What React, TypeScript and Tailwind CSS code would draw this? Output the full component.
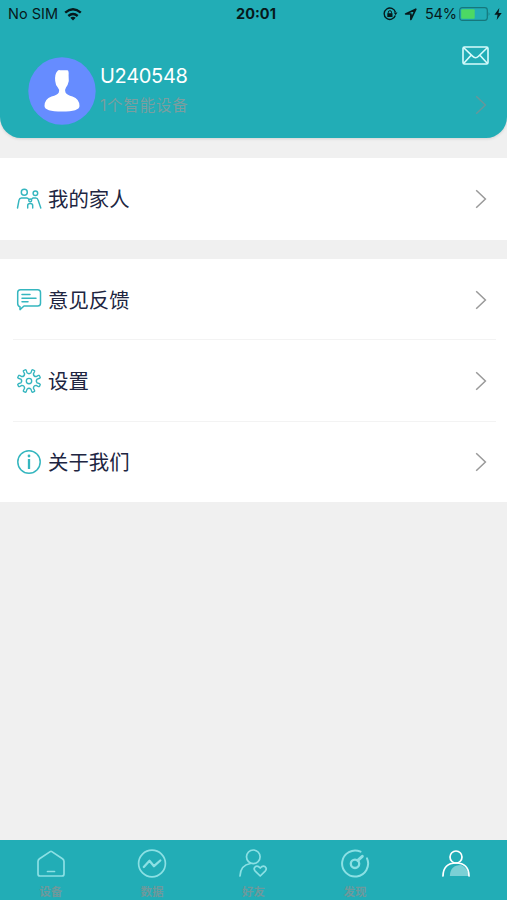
import type { ReactNode } from 'react';

type IconProps = { className?: string };

function ChevronRight({ className = 'text-[#999]' }: IconProps) {
  return (
    <svg className={className} width="12" height="20" viewBox="0 0 12 20" fill="none" stroke="currentColor" strokeWidth="1.5">
      <path d="M1.2 1.3 10.4 10 1.2 18.7" />
    </svg>
  );
}

function FamilyIcon() {
  return (
    <svg width="26" height="22" viewBox="0 0 26 22" fill="none" stroke="currentColor" strokeWidth="1.45" strokeLinecap="round">
      <circle cx="8.3" cy="4.3" r="3" />
      <circle cx="19.4" cy="5.2" r="2.3" />
      <circle cx="14.2" cy="12.4" r="1.4" />
      <path d="M1.5 20 3 12.2Q3.5 10 5.4 10H10.8Q12 10 12.9 11.3M15.5 11.3 17 10H19.8Q21.5 10 22.1 12L24.8 20M11.7 20V17.4Q11.7 15.4 14.2 15.4T16.7 17.4V20" />
    </svg>
  );
}

function FeedbackIcon() {
  return (
    <svg width="26" height="24" viewBox="0 0 26 24" fill="none" stroke="currentColor" strokeWidth="1.5" strokeLinecap="round" strokeLinejoin="round">
      <path d="M4.5 1.8H21.7Q24.5 1.8 24.5 4.6V15.2Q24.5 18 21.7 18H8L4 21.6V18.8Q1.7 18 1.7 15.5V4.6Q1.7 1.8 4.5 1.8Z" />
      <path d="M6 6.6H14M6 10.2H20M6 13.7H12" />
    </svg>
  );
}

const polar = (radius: number, deg: number) => {
  const rad = (deg * Math.PI) / 180;
  return `${(13 + radius * Math.sin(rad)).toFixed(2)} ${(13 - radius * Math.cos(rad)).toFixed(2)}`;
};

// Eight teeth, none of them straight up
const gearPath = [22.5, 67.5, 112.5, 157.5, 202.5, 247.5, 292.5, 337.5]
  .map((a, i) => `${i === 0 ? 'M' : 'L'}${polar(8.4, a - 9)}L${polar(11, a - 8)}Q${polar(12, a - 7)} ${polar(11.8, a - 3)}L${polar(11.8, a + 3)}Q${polar(12, a + 7)} ${polar(11, a + 8)}L${polar(8.4, a + 9)}Q${polar(6.4, a + 22.5)} ${polar(8.4, a + 36)}`)
  .join('');

function GearIcon() {
  return (
    <svg width="26" height="26" viewBox="0 0 26 26" fill="none" stroke="currentColor" strokeWidth="1.35" strokeLinejoin="round">
      <path d={`${gearPath}Z`} />
      <circle cx="13" cy="13" r="2.7" />
    </svg>
  );
}

function InfoIcon() {
  return (
    <svg width="26" height="26" viewBox="0 0 26 26" fill="none" stroke="currentColor">
      <circle cx="13" cy="13" r="11.2" strokeWidth="1.5" />
      <path d="M13 10V20" strokeWidth="2.3" />
      <circle cx="13" cy="7" r="1.4" fill="currentColor" stroke="none" />
    </svg>
  );
}

function StatusBar() {
  return (
    <div className="grid h-7 grid-cols-[1fr_auto_1fr] items-center text-[14.5px] text-[#07191b]">
      <div className="flex items-center gap-[6px] pl-2">
        <span className="w-[50px] whitespace-nowrap">No SIM</span>
        <svg width="18" height="13" viewBox="0 0 18 13" fill="none" stroke="currentColor" strokeWidth="2.4">
          <path d="M1.2 4.7Q9-2 16.8 4.7M4.3 8Q9 4.1 13.7 8" />
          <path d="M9 12.5 6.3 9.8Q9 7.8 11.7 9.8Z" fill="currentColor" stroke="none" />
        </svg>
      </div>
      <span className="pl-[5px] font-bold">20:01</span>
      <div className="flex items-center justify-end pr-[5px]">
        <svg width="15" height="14" viewBox="0 0 15 14" fill="none" stroke="currentColor" strokeWidth="1.4">
          <path d="M12.3 8.5A5.7 5.7 0 1 1 12.4 5.3" />
          <path d="M10.7 5.5H14.5L12.6 8.2Z" fill="currentColor" stroke="none" />
          <rect x="4.3" y="6.2" width="5.2" height="3.8" fill="currentColor" stroke="none" />
          <path d="M5.3 6.5V5.2Q5.3 3.7 6.9 3.7T8.5 5.2V6.5" strokeWidth="1" />
        </svg>
        <svg className="ml-[6px]" width="13" height="13" viewBox="0 0 13 13" fill="none" stroke="currentColor" strokeWidth="1.7" strokeLinejoin="round">
          <path d="M11.8 1.2 1.6 6H6.9V11.4Z" />
        </svg>
        <span className="ml-[8px] w-[31px] whitespace-nowrap tracking-[-0.2px]">54%</span>
        <svg className="ml-[3px]" width="32" height="14" viewBox="0 0 32 14" fill="none">
          <rect x="0.7" y="0.7" width="27.6" height="12.6" rx="2.5" stroke="#16777c" strokeWidth="1.2" />
          <rect x="2.2" y="2.2" width="13.5" height="9.6" rx="1" fill="#4cd964" />
          <path d="M29.7 5Q31.4 7 29.7 9Z" fill="#16777c" />
        </svg>
        <svg className="ml-[3px]" width="8" height="12" viewBox="0 0 8 12" fill="currentColor">
          <path d="M5.3 0 0.4 6.7H3.6L2.7 12 7.7 5H4.5Z" />
        </svg>
      </div>
    </div>
  );
}

function ProfileHeader() {
  return (
    <header className="h-[138px] rounded-b-[21px] bg-[#22adb6] shadow-[0_1px_3px_rgba(0,0,0,0.12)]">
      <StatusBar />
      <div className="flex h-[110px] pl-7 pr-[18px]">
        <svg className="mt-[29px] shrink-0" width="68" height="68" viewBox="0 0 68 68">
          <circle cx="34" cy="34" r="33.7" fill="#668cff" />
          <path d="M29.5 14Q30.5 12.8 32 13.2L39.5 13.2Q41 14 40.6 18L40.8 24Q40 28 38 30.5Q36.5 32.5 37.5 35.5Q39 38 44.5 39.5Q51.5 42 51.5 49Q51.5 54.5 34 54.5T16.5 49Q16.5 42 23.5 39.5Q29.5 38 30.8 35.5Q31.8 32.5 29.8 30.5Q27.5 28 27.2 24Q26.5 17 29.5 14Z" fill="#fff" />
        </svg>
        <div className="ml-1 flex flex-col pt-[35px]">
          <span className="text-[20px] leading-[26px] tracking-[-0.3px] text-white">U240548</span>
          <span className="mt-[5px] text-[15.5px] leading-6 tracking-[0.8px] text-[#7b9ea0]">1个智能设备</span>
        </div>
        <div className="ml-auto flex flex-col items-end">
          <svg className="mt-[18px] text-[#d8fbfc]" width="27" height="19" viewBox="0 0 27 19" fill="none" stroke="currentColor" strokeWidth="1.6" strokeLinejoin="round">
            <rect x="1" y="1" width="25" height="17" rx="1.5" />
            <path d="M1.5 1.5 10.5 10.2Q13.5 13.2 16.5 10.2L25.5 1.5M1.8 17.3 9.3 9M25.2 17.3 17.7 9" />
          </svg>
          <div className="mr-[2px] mt-[30px]">
            <ChevronRight className="text-[#67979a]" />
          </div>
        </div>
      </div>
    </header>
  );
}

function MenuRow({ icon, label }: { icon: ReactNode; label: string }) {
  return (
    <div className="flex h-[81px] items-center pl-4 pr-5">
      <span className="flex w-[26px] justify-center text-[#35b6bf]">{icon}</span>
      <span className="ml-[6px] pt-[3px] text-[20.4px] text-[#202541]">{label}</span>
      <span className="ml-auto">
        <ChevronRight />
      </span>
    </div>
  );
}

const tabs = [
  {
    label: '设备',
    icon: (
      <>
        <path d="M3.5 9.8 14.2 2.6Q15 2.1 15.8 2.6L26.5 9.8Q28 10.9 28 12.5V25Q28 27 26 27H4Q2 27 2 25V12.5Q2 10.9 3.5 9.8Z" />
        <path d="M11.5 22.5H18.5" />
      </>
    ),
  },
  {
    label: '数据',
    icon: (
      <>
        <circle cx="15" cy="14.5" r="13.4" />
        <path d="M6.8 18 12.5 11.8 17 17.2 23.3 11.5" strokeWidth="2.3" />
      </>
    ),
  },
  {
    label: '好友',
    icon: (
      <>
        <circle cx="15.3" cy="7.8" r="6.8" />
        <path d="M2 27Q2.5 16 12.5 14.5" />
        <path d="M22.2 27 17 21.8Q15.2 19.5 17.2 17.8Q19.6 16.1 22.2 19Q24.8 16.1 27.2 17.8Q29.2 19.5 27.4 21.8Z" />
      </>
    ),
  },
  {
    label: '发现',
    icon: (
      <>
        <path d="M20.5 2.7A13 13 0 1 0 27 9.3" strokeWidth="2" />
        <circle cx="15" cy="14.8" r="4.2" strokeWidth="2.3" />
        <path d="M17.8 11.4 22.3 7.3" strokeWidth="3" />
      </>
    ),
  },
  {
    label: '',
    icon: (
      <>
        <path d="M8.8 27Q9.3 16 20 16Q26 18 28 27Z" fill="#7bd0d5" stroke="none" />
        <circle cx="15" cy="8" r="6" />
        <path d="M2 27Q2.3 14 15 14T28 27" />
      </>
    ),
  },
];

function TabBar() {
  return (
    <nav className="mt-auto grid h-[60px] grid-cols-5 overflow-hidden bg-[#22adb6]">
      {tabs.map((tab, i) => (
        <div key={i} className="flex flex-col items-center pt-[9px]">
          <svg
            className={i === 4 ? 'text-white' : 'text-[#8be0e4]'}
            width="30"
            height="30"
            viewBox="0 0 30 30"
            fill="none"
            stroke="currentColor"
            strokeWidth="1.7"
            strokeLinejoin="round"
            strokeLinecap="round"
          >
            {tab.icon}
          </svg>
          <span className="mt-[5px] text-[11.5px] font-bold leading-4 text-[#6d999c]">{tab.label}</span>
        </div>
      ))}
    </nav>
  );
}

export default function App() {
  return (
    <div className="flex h-[900px] w-[507px] flex-col overflow-hidden bg-[#f0f0f0] font-['Inter','Noto_Sans_CJK_SC',sans-serif]">
      <ProfileHeader />
      <main>
        <section className="mt-5 bg-white pb-px">
          <MenuRow icon={<FamilyIcon />} label="我的家人" />
        </section>
        <section className="mt-[19px] bg-white">
          <MenuRow icon={<FeedbackIcon />} label="意见反馈" />
          <div className="-mt-px ml-[13px] mr-[11px] h-px bg-[#f3f3f3]" />
          <MenuRow icon={<GearIcon />} label="设置" />
          <div className="ml-[13px] mr-[11px] h-px bg-[#f3f3f3]" />
          <div className="-mt-px">
            <MenuRow icon={<InfoIcon />} label="关于我们" />
          </div>
        </section>
      </main>
      <TabBar />
    </div>
  );
}
